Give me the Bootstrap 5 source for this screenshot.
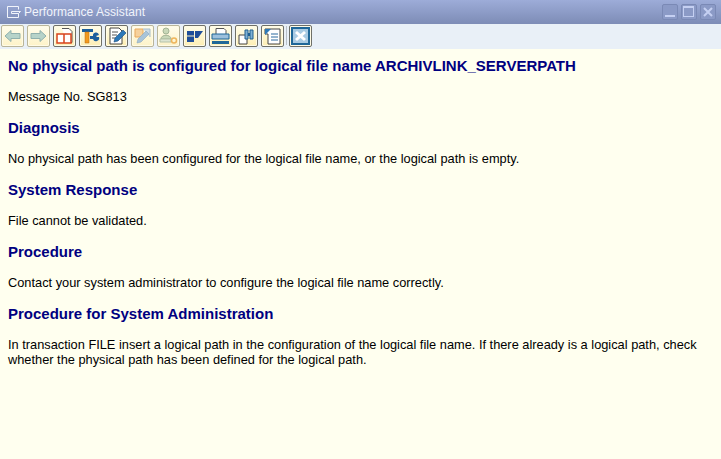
<!doctype html>
<html lang="en"><head><meta charset="utf-8">
<link href="https://cdn.jsdelivr.net/npm/bootstrap@5.3.0/dist/css/bootstrap.min.css" rel="stylesheet">
<style>
html,body{height:100%;overflow:hidden}
body{background:#ffffef;font-family:"Liberation Sans",Arial,sans-serif;font-size:12.8px;color:#000;display:flex;flex-direction:column}
.titlebar{height:24px;background:linear-gradient(#9dacd8,#7d8cb6);color:#f1f4fb;font-size:12px;letter-spacing:.05px;padding-left:6px;gap:2px}
.wingroup{gap:3px;margin-right:5px}
.winbtn{width:16px;height:16px;border:1px solid #7a89b5;border-radius:2px;background:#8b9ac6}
.toolbar{height:25px;background:#e9f0f7;padding:0 0 2px 1px;gap:3px}
.tbtn{width:23px;height:22px;border:1px solid #6f7068;border-radius:2px;background:linear-gradient(#fffde8,#fdeeb4);box-shadow:inset 0 0 0 1px #fffbe6;padding:0}
.tbtn-off{border-color:#b9b59a;background:linear-gradient(#fffdec,#fdf3c8)}
.tbtn svg,.winbtn svg{display:block}
.tsep{width:1px;height:19px;background:#b9c0c8;margin:0 -1px 0 -1px}
.docbody{flex:1;padding:8px 8px 0}
.docbody h1,.docbody h2{font-family:"Liberation Sans",Arial,sans-serif;font-weight:700;color:#000080;margin:0}
.docbody h1,.docbody h2{font-size:15px;line-height:17px;margin-bottom:15px}
.docbody p{margin:0 0 15px;line-height:15px}
</style></head><body>
<div class="titlebar d-flex align-items-center">
<svg width="16" height="14" viewBox="0 0 16 14" fill="none" stroke="#f1f4fb" stroke-width="1"><path d="M1.500 1.500h11v3M1.500 1.500v11h11v-4M5.500 6.500h9l-2 2h-7z"/></svg>
<span class="flex-grow-1">Performance Assistant</span>
<div class="wingroup d-flex">
<div class="winbtn"><svg width="14" height="14" viewBox="0 0 14 14"><rect x="2" y="10" width="10" height="2" fill="#c5d0f2"/></svg></div>
<div class="winbtn"><svg width="14" height="14" viewBox="0 0 14 14" fill="none"><rect x="1.500" y="1.500" width="10" height="10" stroke="#c5d0f2"/><rect x="1" y="1" width="11" height="2" fill="#c5d0f2"/></svg></div>
<div class="winbtn"><svg width="14" height="14" viewBox="0 0 14 14" stroke="#c5d0f2" stroke-width="2"><path d="M3 3l8 8M11 3l-8 8"/></svg></div>
</div>
</div>
<div class="toolbar d-flex align-items-end">
<button class="tbtn tbtn-off"><svg width="21" height="20" viewBox="0 0 21 20"><path d="M3 10L9 4.500v3h9v5H9v3z" fill="#b6d3c9" stroke="#8fb0ad"/></svg></button>
<button class="tbtn tbtn-off"><svg width="21" height="20" viewBox="0 0 21 20"><path d="M18 10L12 4.500v3H3v5h9v3z" fill="#b6d3c9" stroke="#8fb0ad"/></svg></button>
<button class="tbtn"><svg width="21" height="20" viewBox="0 0 21 20"><path d="M8 2.500h7l3 3v11h-5" fill="#fff" stroke="#555"/><path d="M3 8h7v9H3zM10 8h7v9h-7z" fill="#fff" stroke="#d8431c" stroke-width="1.500"/></svg></button>
<button class="tbtn"><svg width="21" height="20" viewBox="0 0 21 20"><path d="M2 3h11v3H2z" fill="#1c5f9c"/><path d="M5 6h4v11H5z" fill="#f29a1f" stroke="#b86a10" stroke-width=".5"/><path d="M10 10h3a3 3 0 0 1 6-1l-3 1 1 1h2a3 3 0 0 1-6 2h-3z" fill="#1c5f9c"/></svg></button>
<button class="tbtn"><svg width="21" height="20" viewBox="0 0 21 20"><path d="M4 2h9l3 3v13H4z" fill="#fff" stroke="#444"/><path d="M6 6h6M6 9h5M6 12h3" stroke="#555"/><path d="M8 16l1-4 8-8 3 3-8 8z" fill="#2c78b8" stroke="#164a7e" stroke-width=".6"/></svg></button>
<button class="tbtn tbtn-off"><svg width="21" height="20" viewBox="0 0 21 20"><path d="M3 3h8v8H3z" fill="#f6d19c" stroke="#e8a95c"/><path d="M11 3h7v8" fill="#cfdde6" stroke="#a5bccb"/><path d="M5 17l1-4 8-8 3 3-8 8z" fill="#a9c4d8" stroke="#8aa8bf" stroke-width=".6"/></svg></button>
<button class="tbtn tbtn-off"><svg width="21" height="20" viewBox="0 0 21 20"><circle cx="8" cy="5" r="3" fill="#c9d8b8" stroke="#a3b394"/><path d="M3 13c0-5 10-5 10 0z" fill="#c9d8b8" stroke="#a3b394"/><path d="M2 13h11v3H2z" fill="#dde5d2" stroke="#b5c2a8"/><circle cx="16" cy="14.500" r="2.500" fill="none" stroke="#eeb55d" stroke-width="1.500"/></svg></button>
<button class="tbtn"><svg width="21" height="20" viewBox="0 0 21 20" fill="#1f4e99"><path d="M3 5h7v11H3z"/><path d="M11 5h8l-5 7h-3z"/><path d="M3 10h7" stroke="#fdf1c0"/></svg></button>
<button class="tbtn"><svg width="21" height="20" viewBox="0 0 21 20"><path d="M6 2.500h8l2 2v4H6z" fill="#fff" stroke="#555"/><path d="M2 8h17v5H2z" fill="#9cc0dc" stroke="#1f6798"/><path d="M2 15h17v3H2z" fill="#1f6798"/></svg></button>
<button class="tbtn"><svg width="21" height="20" viewBox="0 0 21 20"><path d="M3 9h8v9H3z" fill="#fff" stroke="#444"/><path d="M9 4h3v9H9zM14 4h3v9h-3z" fill="#7fb0d4" stroke="#1f5f90"/><path d="M12 7h2v3h-2z" fill="#1f5f90"/></svg></button>
<button class="tbtn"><svg width="21" height="20" viewBox="0 0 21 20"><path d="M3 3h15v15H6V8H3z" fill="#fff" stroke="#444"/><path d="M3 3h6L3 9z" fill="#2c78b8"/><path d="M9 8h7M9 11h7M9 14h7" stroke="#2c6aa0"/></svg></button>
<div class="tsep align-self-center"></div>
<button class="tbtn"><svg width="21" height="20" viewBox="0 0 21 20"><rect x="2" y="2" width="17" height="16" fill="#a9cbe3" stroke="#1f6798" stroke-width="2"/><path d="M6 6l9 8M15 6l-9 8" stroke="#fff" stroke-width="3"/></svg></button>
</div>
<main class="docbody">
<h1>No physical path is configured for logical file name ARCHIVLINK_SERVERPATH</h1>
<p>Message No. SG813</p>
<h2>Diagnosis</h2>
<p>No physical path has been configured for the logical file name, or the logical path is empty.</p>
<h2>System Response</h2>
<p>File cannot be validated.</p>
<h2>Procedure</h2>
<p>Contact your system administrator to configure the logical file name correctly.</p>
<h2>Procedure for System Administration</h2>
<p>In transaction FILE insert a logical path in the configuration of the logical file name. If there already is a logical path, check whether the physical path has been defined for the logical path.</p>
</main>
<script src="https://cdn.jsdelivr.net/npm/bootstrap@5.3.0/dist/js/bootstrap.bundle.min.js"></script>
</body></html>
